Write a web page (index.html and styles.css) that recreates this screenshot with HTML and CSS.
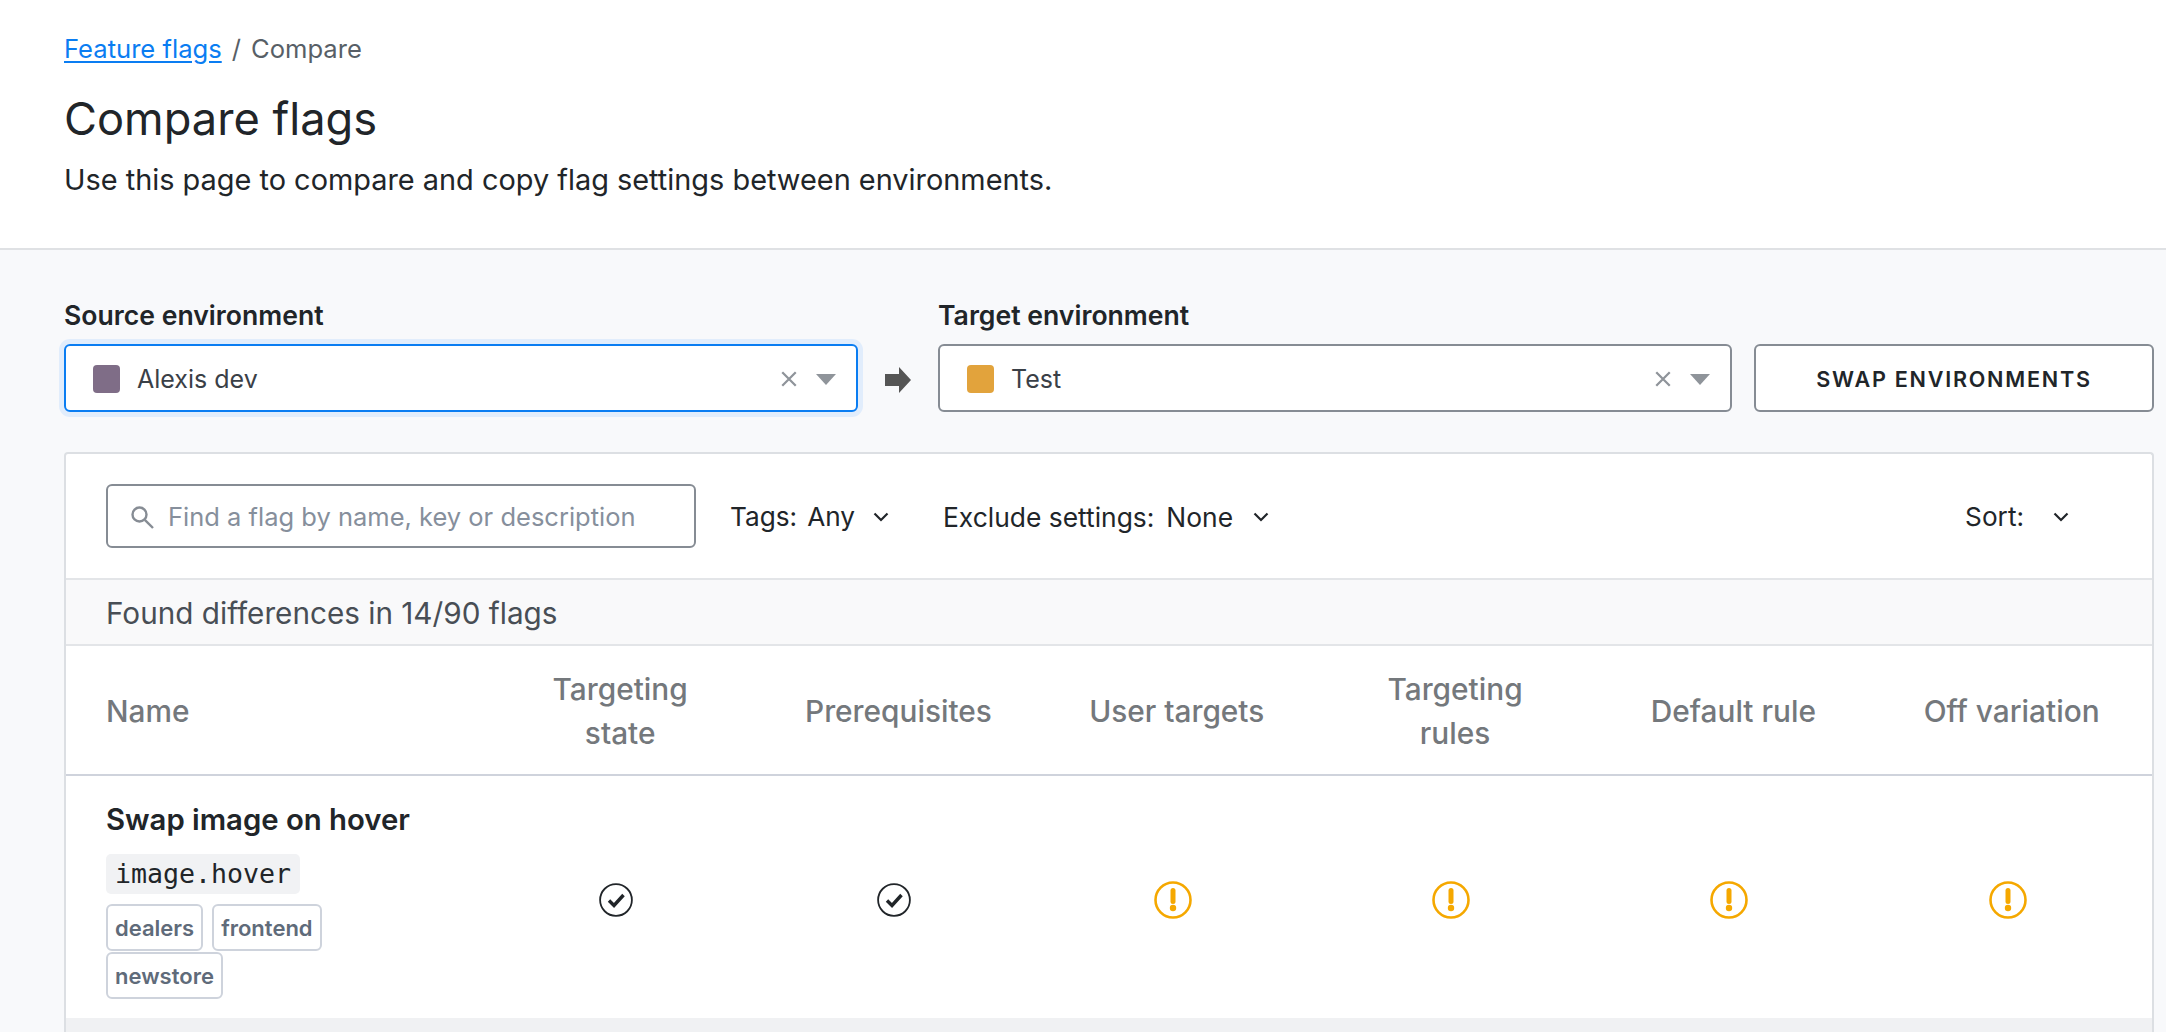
FILE: index.html
```html
<!DOCTYPE html>
<html lang="en">
<head>
<meta charset="utf-8">
<title>Compare flags</title>
<link rel="stylesheet" href="styles.css">
</head>
<body>
<header class="page-head">
  <nav class="crumbs"><a href="#" class="crumb-link">Feature flags</a><span class="crumb-sep">/</span><span>Compare</span></nav>
  <h1 class="title">Compare flags</h1>
  <p class="lead">Use this page to compare and copy flag settings between environments.</p>
</header>
<main class="content">
  <section class="env-row">
    <div class="env-field">
      <label class="env-label">Source environment</label>
      <div class="select select-focus">
        <span class="swatch swatch-purple"></span><span class="select-value">Alexis dev</span>
        <svg class="clear" viewBox="0 0 16 16"><path d="M2 2l12 12M14 2L2 14"/></svg>
        <svg class="caret" viewBox="0 0 20 11"><path d="M0 0h20L10 11z"/></svg>
      </div>
    </div>
    <svg class="env-arrow" viewBox="0 0 26 26"><path d="M0 7h14V0l12 13-12 13v-7H0z"/></svg>
    <div class="env-field">
      <label class="env-label">Target environment</label>
      <div class="select">
        <span class="swatch swatch-orange"></span><span class="select-value">Test</span>
        <svg class="clear" viewBox="0 0 16 16"><path d="M2 2l12 12M14 2L2 14"/></svg>
        <svg class="caret" viewBox="0 0 20 11"><path d="M0 0h20L10 11z"/></svg>
      </div>
    </div>
    <button class="swap">SWAP ENVIRONMENTS</button>
  </section>

  <section class="panel">
    <div class="toolbar">
      <div class="search">
        <svg class="search-icon" viewBox="0 0 24 24"><circle cx="9.5" cy="9.5" r="7"/><path d="M14.8 14.8L23 23"/></svg>
        <span class="search-text">Find a flag by name, key or description</span>
      </div>
      <div class="filter filter-tags"><span>Tags:</span><span>Any</span><svg class="chev" viewBox="0 0 16 10"><path d="M1.500 1.500L8 8l6.500-6.500"/></svg></div>
      <div class="filter filter-exclude"><span>Exclude settings:</span><span>None</span><svg class="chev" viewBox="0 0 16 10"><path d="M1.500 1.500L8 8l6.500-6.500"/></svg></div>
      <div class="filter filter-sort"><span>Sort:</span><svg class="chev" viewBox="0 0 16 10"><path d="M1.500 1.500L8 8l6.500-6.500"/></svg></div>
    </div>
    <div class="summary">Found differences in 14/90 flags</div>
    <div class="grid grid-head">
      <div class="col-name">Name</div>
      <div class="col">Targeting<br>state</div>
      <div class="col">Prerequisites</div>
      <div class="col">User targets</div>
      <div class="col">Targeting<br>rules</div>
      <div class="col">Default rule</div>
      <div class="col">Off variation</div>
    </div>
    <div class="grid grid-row">
      <div class="flag">
        <div class="flag-name">Swap image on hover</div>
        <code class="flag-key">image.hover</code>
        <div class="tags"><span class="tag">dealers</span><span class="tag">frontend</span><span class="tag">newstore</span></div>
      </div>
      <div class="cell"><svg class="ok" viewBox="0 0 34 34"><circle cx="17" cy="17" r="15.900"/><path d="M10 17.500l5 5 9.500-10.500"/></svg></div>
      <div class="cell"><svg class="ok" viewBox="0 0 34 34"><circle cx="17" cy="17" r="15.900"/><path d="M10 17.500l5 5 9.500-10.500"/></svg></div>
      <div class="cell"><svg class="warn" viewBox="0 0 38 38"><circle cx="19" cy="19" r="17.500"/><path class="warn-mark" d="M19 9.500v11"/><circle class="warn-dot" cx="19" cy="27" r="3.200"/></svg></div>
      <div class="cell"><svg class="warn" viewBox="0 0 38 38"><circle cx="19" cy="19" r="17.500"/><path class="warn-mark" d="M19 9.500v11"/><circle class="warn-dot" cx="19" cy="27" r="3.200"/></svg></div>
      <div class="cell"><svg class="warn" viewBox="0 0 38 38"><circle cx="19" cy="19" r="17.500"/><path class="warn-mark" d="M19 9.500v11"/><circle class="warn-dot" cx="19" cy="27" r="3.200"/></svg></div>
      <div class="cell"><svg class="warn" viewBox="0 0 38 38"><circle cx="19" cy="19" r="17.500"/><path class="warn-mark" d="M19 9.500v11"/><circle class="warn-dot" cx="19" cy="27" r="3.200"/></svg></div>
    </div>
    <div class="stripe"></div>
  </section>
</main>
</body>
</html>
```

FILE: styles.css
```css
* { box-sizing: border-box; }
html, body { height: 100%; }
body {
  margin: 0;
  overflow: hidden;
  display: flex;
  flex-direction: column;
  font-family: Inter, "Liberation Sans", sans-serif;
  color: #212529;
  background: #f8f9fb;
}
.page-head {
  height: 250px;
  flex: none;
  padding: 33px 64px 0;
  background: #fff;
  border-bottom: 2px solid #dfe1e4;
}
.crumbs { font-size: 25.600px; line-height: 32px; color: #585f67; display: flex; gap: 10px; }
.crumb-link { color: #0a7df2; text-decoration: underline; text-underline-offset: 3px; }
.title { margin: 29px 0 0; font-size: 45.200px; line-height: 50px; font-weight: 400; color: #212529; }
.lead { margin: 18px 0 0; font-size: 28.900px; line-height: 36px; color: #212529; }

.content { flex: 1; display: flex; flex-direction: column; min-height: 0; padding: 50px 12px 0 64px; }
.env-row { display: flex; align-items: flex-end; flex: none; }
.env-field { width: 794px; flex: none; }
.env-label { display: block; font-size: 26.600px; line-height: 30px; font-weight: 600; color: #212529; margin-bottom: 14px; }
.select {
  height: 68px;
  display: flex;
  align-items: center;
  padding: 2px 20px 0 27px;
  background: #fff;
  border: 2px solid #868c94;
  border-radius: 6px;
}
.select-focus { border-color: #0a7df2; box-shadow: 0 0 0 5px #e1edfc; }
.swatch { width: 27px; height: 28px; border-radius: 4px; flex: none; margin-right: 17px; }
.swatch-purple { background: #7f6d87; }
.swatch-orange { background: #e2a33c; }
.select-value { flex: 1; font-size: 25px; color: #3a4047; }
.clear { width: 18px; height: 18px; margin-right: 18px; fill: none; stroke: #8f949a; stroke-width: 2; }
.caret { width: 20px; height: 11px; fill: #8f949a; }
.env-arrow { width: 26px; height: 26px; flex: none; margin: 0 27px 19px 27px; fill: #555; }
.swap {
  flex: 1;
  height: 68px;
  margin-left: 22px;
  padding-top: 5px;
  background: #fff;
  border: 2px solid #868c94;
  border-radius: 6px;
  font: 600 21.600px/1 Inter, "Liberation Sans", sans-serif;
  letter-spacing: 1.750px;
  color: #212529;
}
.panel {
  flex: 1;
  display: flex;
  flex-direction: column;
  min-height: 0;
  margin-top: 40px;
  background: #fff;
  border: 2px solid #dcdfe3;
  border-bottom: 0;
  border-radius: 4px 4px 0 0;
}
.toolbar { height: 126px; flex: none; display: flex; align-items: center; padding: 0 83px 0 40px; border-bottom: 2px solid #e3e5e8; font-size: 26.200px; color: #212529; }
.search { width: 590px; height: 64px; display: flex; align-items: center; padding: 1px 0 0 22px; border: 2px solid #868c94; border-radius: 6px; flex: none; }
.search-icon { width: 24px; height: 24px; fill: none; stroke: #868c94; stroke-width: 2.400; margin-right: 14px; }
.search-text { font-size: 25.500px; color: #868f9c; }
.filter { display: flex; align-items: center; gap: 10px; padding-top: 1px; }
.filter-tags { margin-left: 34px; }
.filter-tags .chev { margin-left: 8px; }
.filter-exclude { margin-left: 54px; gap: 12px; font-size: 26.400px; }
.filter-exclude .chev { margin-left: 8px; }
.filter-sort { margin-left: auto; gap: 29px; }
.chev { width: 16px; height: 10px; margin-left: 7px; fill: none; stroke: #212529; stroke-width: 2.200; }
.filter-sort .chev { margin-left: 0; }
.summary { height: 66px; flex: none; display: flex; align-items: center; padding: 2px 0 0 40px; background: #f9f9fa; border-bottom: 2px solid #e3e5e8; font-size: 29.700px; color: #484e55; }
.grid { display: grid; grid-template-columns: 415px repeat(6, 278.300px); flex: none; }
.grid-head { height: 130px; padding-top: 2px; align-items: center; border-bottom: 2px solid #cfd3dc; font-size: 29.800px; line-height: 44px; font-weight: 500; color: #74787c; }
.col-name { padding-left: 40px; }
.col { text-align: center; }
.grid-row { height: 242px; align-items: center; }
.flag { align-self: start; padding: 27px 0 0 40px; }
.flag-name { font-size: 29.300px; line-height: 34px; font-weight: 600; color: #212529; }
.flag-key {
  display: inline-block;
  margin-top: 17px;
  height: 40px;
  padding: 0 9px;
  background: #f1f2f4;
  border-radius: 5px;
  font: 26.600px/40px "DejaVu Sans Mono", "Liberation Mono", monospace;
  color: #212529;
}
.tags { display: flex; flex-wrap: wrap; column-gap: 9px; row-gap: 1px; margin-top: 10px; width: 300px; }
.tag { height: 47px; padding: 0 7px; display: flex; align-items: center; border: 2px solid #ced3dc; border-radius: 6px; font-size: 22px; font-weight: 600; color: #5f6b7a; }
.cell { display: flex; justify-content: center; padding-right: 8px; padding-top: 6px; }
.ok { width: 34px; height: 34px; fill: none; stroke: #212529; }
.ok circle { stroke-width: 1.800; }
.ok path { stroke-width: 3.400; }
.warn { width: 38px; height: 38px; fill: none; stroke: #f5a800; }
.warn circle { stroke-width: 2.600; }
.warn-mark { stroke-width: 5; stroke-linecap: round; }
.warn .warn-dot { fill: #f5a800; stroke: none; }
.stripe { flex: 1; background: #f0f1f3; }
```
